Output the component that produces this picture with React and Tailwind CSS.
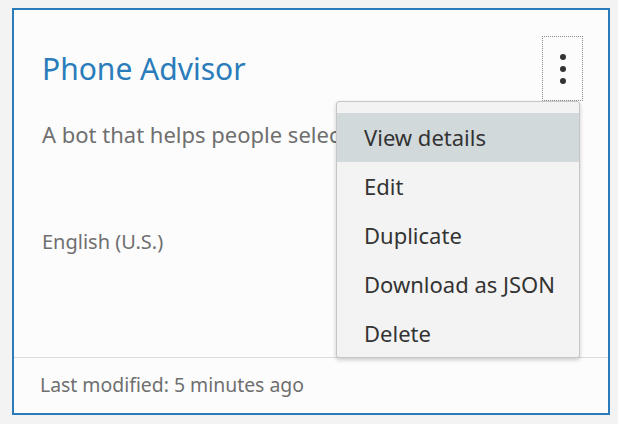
import React from "react";

const items = ["View details", "Edit", "Duplicate", "Download as JSON", "Delete"];

export default function App() {
  return (
    <div
      className="w-[618px] h-[424px] bg-[#f3f3f3] pt-[8px] pl-[12px]"
      style={{ fontFamily: '"Noto Sans", "Open Sans", sans-serif' }}
    >
      <div className="relative w-[598px] h-[407px] border-2 border-[#2b7bb9] bg-[#fcfcfc] flex flex-col">
        <div className="flex-1 pl-[28px]">
          <h2 className="mt-[41px] text-[30px] leading-[36px] text-[#2a7cba]">Phone Advisor</h2>
          <p className="mt-[33px] text-[22px] leading-[28px] text-[#6f6f6f] whitespace-nowrap">
            A bot that helps people select a new phone.
          </p>
          <p className="mt-[82px] text-[20px] leading-[24px] text-[#6f6f6f]">English (U.S.)</p>
        </div>
        <div className="h-[56px] border-t border-[#dcdcdc] pl-[26px] pt-[15px]">
          <span className="text-[19.4px] leading-[24px] text-[#6f6f6f]">Last modified: 5 minutes ago</span>
        </div>

        {/* overflow button, focused */}
        <button className="absolute left-[528px] top-[26px] w-[41px] h-[65px] border border-dotted border-[#8a8a8a] flex flex-col items-center justify-center gap-[6px]">
          <span className="w-[6px] h-[6px] rounded-full bg-[#333]" />
          <span className="w-[6px] h-[6px] rounded-full bg-[#333]" />
          <span className="w-[6px] h-[6px] rounded-full bg-[#333]" />
        </button>

        <ul className="absolute left-[322px] top-[91px] w-[244px] h-[257px] bg-[#f3f3f3] border border-[#c6c6c6] rounded-[3px] shadow-[0_2px_4px_rgba(0,0,0,0.2)] pt-[11px]">
          {items.map((t, i) => (
            <li
              key={t}
              className={
                "h-[49px] flex items-center pl-[27px] text-[22px] text-[#333] " +
                (i === 0 ? "bg-[#d1d9db]" : "")
              }
            >
              {t}
            </li>
          ))}
        </ul>
      </div>
    </div>
  );
}
